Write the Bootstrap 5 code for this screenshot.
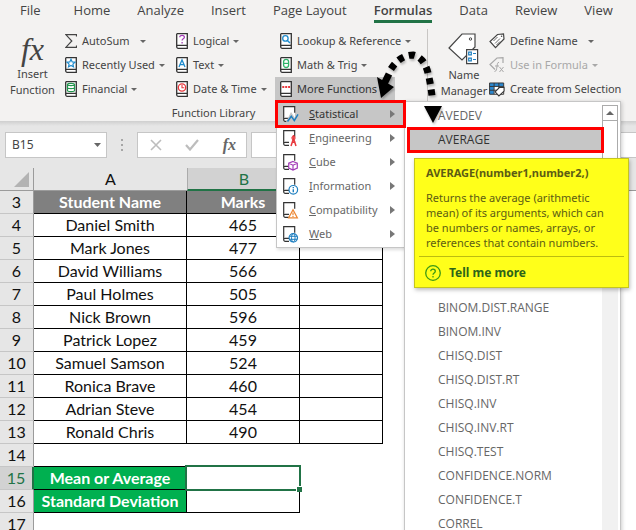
<!DOCTYPE html>
<html lang="en">
<head>
<meta charset="utf-8">
<meta name="viewport" content="width=device-width, initial-scale=1">
<title>Workbook - Formulas</title>
<link href="https://cdn.jsdelivr.net/npm/bootstrap@5.3.0/dist/css/bootstrap.min.css" rel="stylesheet">
<style>
body{font-family:"Noto Sans","Open Sans",sans-serif;font-size:11px;line-height:16px;color:#444;background:#fff}
.app{height:100vh}
button{border:0;background:none;padding:0;color:inherit;white-space:nowrap}
svg{display:block;flex:none;fill:none}
.ribbon{background:#f3f2f1;height:121px}
.tabs{gap:27px;padding-left:20px;font-family:"Open Sans",sans-serif;font-size:13px;line-height:17px;height:29px;padding-top:2px}
.tabs a{color:#444;text-decoration:none;height:21px;white-space:nowrap}
.tabs a:first-child{margin-right:6px}
.tabs a.current{font-weight:600;border-bottom:3px solid #217346}
.library{width:427px;flex:none}
.big{width:65px;padding-top:3px;flex:none}
.fx-letters{font-family:"Liberation Serif",serif;font-style:italic;font-size:32px;line-height:34px}
.big.manager{width:50px;margin-left:11px;padding-top:4px}
.manager svg{margin-bottom:2px}
.stack{flex:none}
.stack.one{width:111px}.stack.two{width:99px}
.cmd{height:24px;gap:5px;display:flex;align-items:center}
.cmd.open{background:#c6c6c6;width:120px;color:#333}
.stack.three .cmd{padding-left:5px}
.caret{border:3px solid transparent;border-top:3px solid #666;border-bottom:0;margin-left:-1px}
.caret.far{margin-left:5px}
.group-name{line-height:16px;padding-top:4px}
.rule{width:1px;height:73px;background:#c8c6c4}
.faded{color:#a8a8a8}
.faded .caret{border-top-color:#a8a8a8}
.bar{background:linear-gradient(#cfcfcf,#e6e6e6 5px);height:47px;padding:11px 0 10px 5px}
.field{background:#fff;border:1px solid #c6c6c6}
.field input{border:0;padding:0 0 0 6px;min-width:0;width:70px;color:#444;outline:0;font-size:12px}
.name-field{width:102px}
.dots{width:30px}
.fx-field{width:110px;padding:0 10px 0 12px}
.fx-field .small-fx{font:italic bold 16px/20px "Liberation Serif",serif;color:#666}
.sheet{table-layout:fixed;width:100%;border-collapse:separate;border-spacing:0;font-family:Lato,"Open Sans",sans-serif;font-size:16px;line-height:20px;color:#111;text-align:center}
.sheet td,.sheet th{height:23px;padding:0;font-weight:400;white-space:nowrap}
.sheet thead th{background:#e6e6e6;border-bottom:1px solid #9b9b9b}
.sheet thead th.on{background:#d2d2d2;color:#217346;border-bottom:2px solid #217346;border-left:1px solid #ababab}
.sheet tbody th.num,.sheet thead th.corner{background:#e6e6e6;border-right:1px solid #9b9b9b}
.sheet tbody th.num{border-bottom:1px solid #c6c6c6}
.sheet tbody th.on{background:#d2d2d2;color:#217346;border-right:2px solid #217346}
.sheet .ln{border-right:1px solid #000;border-bottom:1px solid #000}
.sheet .over td.top{border-bottom:1px solid #000}
.sheet .head{background:#808080;color:#fff;font-weight:700}
.sheet .sum{background:#00b050;color:#fff;font-weight:700}
.picked{position:relative}
.picked::before{content:"";position:absolute;inset:-2px;border:2px solid #217346}
.picked::after{content:"";position:absolute;right:-3px;bottom:-3px;width:6px;height:6px;background:#217346;border:1px solid #fff;border-width:1px 0 0 1px}
.menu{position:absolute;left:1px;top:23px;width:129px;background:#fff;border:1px solid #c6c6c6;padding:1px 0;box-shadow:1px 2px 3px #0002;z-index:5}
.menu .entry{height:24px;width:100%;display:flex;align-items:center;padding:0 9px 0 6px;color:#666}
.menu .entry svg{margin-right:10px}
.arrow-right{border:4px solid transparent;border-left:5px solid #777;border-right:0;margin-left:auto}
.menu .entry.hot,.fn.hot{background:#c6c6c6;color:#333;outline:3px solid #f00;position:relative;z-index:3}
.menu .entry.hot{outline-offset:-1px}
.submenu{position:absolute;left:127px;top:0;width:217px;height:100vh;background:#fff;border:1px solid #c6c6c6;padding:2px 2px 0 1px;box-shadow:1px 1px 4px #0003}
.submenu ul{width:196px}
.fn{display:block;width:100%;height:24px;text-align:left;padding-left:32px;color:#666;font-family:"Open Sans",sans-serif;font-size:12px}
.fn.hot{height:20px;margin:2px 4px 2px 4px;width:191px;padding-left:28px}
.gap-rows{height:144px;position:relative}
.track{width:16px;background:#f1f1f1;margin-top:1px}
.track button{height:16px;width:16px;border:1px solid #ababab;background:#fff;display:flex;align-items:center;justify-content:center}
.thumb{height:60px;border:1px solid #ababab;border-top:0;background:#fff}
.tip{position:absolute;left:8px;top:6px;width:215px;background:#ffff1a;border:1px solid #c5c51e;box-shadow:1px 2px 4px #0004;color:#5c5c14;z-index:6;padding:6px 4px 5px}
.tip .txt{padding:0 7px;line-height:15px;white-space:nowrap}
.tip .title{margin-bottom:10px}
.tip hr{margin:6px 0 7px;border-color:#bcbc10;opacity:1}
.tip a{color:#2d6418;text-decoration:none;font-weight:700;font-size:12px;padding:0 6px;gap:8px;height:18px}
.pointer{position:absolute;left:370px;top:45px;z-index:9;pointer-events:none;filter:drop-shadow(1px 2px 1px #0004)}
</style>
<script src="https://cdn.jsdelivr.net/npm/bootstrap@5.3.0/dist/js/bootstrap.bundle.min.js"></script>
</head>
<body>
<svg width="0" height="0" class="position-absolute" aria-hidden="true">
  <symbol id="book" viewBox="0 0 12 16"><path d="M.7.7h10.6v14.6H2.2a1.5 1.5 0 0 1-1.5-1.5V.7M.7 13.5a1.3 1.3 0 0 1 1.5-1.2h9" fill="#fff" stroke="#333" stroke-width="1.3"/></symbol>
  <symbol id="page" viewBox="0 0 16 17"><path d="M6 15.3H2.2a1.5 1.5 0 0 1-1.5-1.5V.7h11v6M.7 13.6a1.4 1.4 0 0 1 1.5-1.3H6" stroke="#333" stroke-width="1.2"/></symbol>
</svg>
<div class="app position-relative overflow-hidden">
  <header class="ribbon">
    <nav class="tabs d-flex" aria-label="Ribbon tabs">
      <a href="#">File</a><a href="#">Home</a><a href="#">Analyze</a><a href="#">Insert</a><a href="#">Page Layout</a><a href="#" class="current">Formulas</a><a href="#">Data</a><a href="#">Review</a><a href="#">View</a>
    </nav>
    <div class="d-flex">
      <section class="library">
        <div class="d-flex">
          <button class="big d-flex flex-column align-items-center"><span class="fx-letters">fx</span><span>Insert</span><span>Function</span></button>
          <div class="stack one">
            <button class="cmd"><svg width="12" height="16" viewBox="0 0 12 16"><path d="M11.5 3.5V1.6H.8L6.8 8 .8 14.4h10.7v-2" stroke="#444" stroke-width="1.2"/></svg>AutoSum<i class="caret far"></i></button>
            <button class="cmd"><svg width="12" height="16"><use href="#book"/><path d="M6 2.3l1.2 2.6 2.8.3-2.1 1.9.6 2.8L6 8.500 3.500 9.900l.6-2.800L2 5.200l2.800-.3z" stroke="#1e8bcd" stroke-width="1.200"/></svg>Recently Used<i class="caret"></i></button>
            <button class="cmd"><svg width="12" height="16"><use href="#book"/><path d="M2.500 3.500c0-1.500 7-1.500 7 0v6c0 1.500-7 1.500-7 0zc0 1.500 7 1.500 7 0M2.500 6.500c0 1.500 7 1.500 7 0" stroke="#23954e" stroke-width="1.200"/></svg>Financial<i class="caret"></i></button>
          </div>
          <div class="stack two">
            <button class="cmd"><svg width="12" height="16"><use href="#book"/><path d="M3.800 4.200c0-2.500 4.600-2.400 4.600 0 0 1.600-2.300 1.600-2.300 3.300M6.100 9v1.500" stroke="#a43db8" stroke-width="1.300"/></svg>Logical<i class="caret"></i></button>
            <button class="cmd"><svg width="12" height="16"><use href="#book"/><path d="M3 10l3-7 3 7M4 7.700h4" stroke="#1e8bcd" stroke-width="1.300"/></svg>Text<i class="caret"></i></button>
            <button class="cmd"><svg width="12" height="16"><use href="#book"/><circle cx="6" cy="6.500" r="3.700" stroke="#e8383d" stroke-width="1.300"/><path d="M6 4v2.800h2.300" stroke="#e8383d" stroke-width="1.100"/></svg>Date &amp; Time<i class="caret"></i></button>
          </div>
          <div class="stack three">
            <button class="cmd"><svg width="12" height="16"><use href="#book"/><circle cx="5.400" cy="5.400" r="2.700" stroke="#1e8bcd" stroke-width="1.300"/><path d="M7.400 7.400L10 10" stroke="#1e8bcd" stroke-width="1.400"/></svg>Lookup &amp; Reference<i class="caret"></i></button>
            <button class="cmd"><svg width="12" height="16"><use href="#book"/><rect x="3.600" y="2.300" width="5" height="8.200" rx="2.500" stroke="#2fb36a" stroke-width="1.300"/><path d="M3.600 6.400h5" stroke="#2fb36a" stroke-width="1.200"/></svg>Math &amp; Trig<i class="caret"></i></button>
            <div class="position-relative">
              <button class="cmd open" aria-expanded="true"><svg width="12" height="16"><use href="#book"/><path d="M2.300 6h7.800" stroke="#e8383d" stroke-width="2" stroke-dasharray="2 .9"/></svg>More Functions<i class="caret"></i></button>
              <div class="menu">
                <button class="entry hot"><svg width="16" height="17"><path d="M1 1h11v14H1z" fill="#fff"/><use href="#page"/><path d="M3 16l5-10 4 6 3-4v9H3z" fill="#c6c6c6"/><path d="M4.500 15.500l3.800-5.300 3 4.400 3.700-6.300" stroke="#1e7fc0" stroke-width="1.500"/></svg><span><u>S</u>tatistical</span><i class="arrow-right"></i></button>
                <button class="entry"><svg width="16" height="17"><use href="#page"/><path d="M8 16l2.500-7.500L13 16M8.600 12.300h4M10.500 5v2" stroke="#e8383d" stroke-width="1.500"/><circle cx="10.500" cy="8" r="1.500" stroke="#e8383d" stroke-width="1.300"/></svg><span><u>E</u>ngineering</span><i class="arrow-right"></i></button>
                <button class="entry"><svg width="16" height="17"><use href="#page"/><path d="M10 7.500l4.300 1.700v4.900L10 16l-4.300-1.900V9.200zM5.700 9.200l4.300 2 4.300-2M10 11.200V16" fill="#fff" stroke="#a43db8" stroke-width="1.200"/></svg><span><u>C</u>ube</span><i class="arrow-right"></i></button>
                <button class="entry"><svg width="16" height="17"><use href="#page"/><circle cx="10.300" cy="11.800" r="4.300" fill="#fff" stroke="#1e7fc0" stroke-width="1.200"/><path d="M10.300 9v1.300M10.300 11.300v3" stroke="#1e7fc0" stroke-width="1.400"/></svg><span><u>I</u>nformation</span><i class="arrow-right"></i></button>
                <button class="entry"><svg width="16" height="17"><use href="#page"/><path d="M10 7.800l4.300 8H5.700z" fill="#fff" stroke="#ed8733" stroke-width="1.300"/><path d="M10 10.500v2.600M10 13.800V15" stroke="#ed8733" stroke-width="1.200"/></svg><span><u>C</u>ompatibility</span><i class="arrow-right"></i></button>
                <button class="entry"><svg width="16" height="17"><use href="#page"/><circle cx="10.300" cy="11.800" r="4.200" fill="#fff" stroke="#1e7fc0" stroke-width="1.200"/><ellipse cx="10.300" cy="11.800" rx="1.800" ry="4.200" stroke="#1e7fc0"/><path d="M6.500 10.300h7.600M6.500 13.300h7.600" stroke="#1e7fc0"/></svg><span><u>W</u>eb</span><i class="arrow-right"></i></button>
                <div class="submenu d-flex justify-content-between">
                  <ul class="list-unstyled mb-0">
                    <li><button class="fn">AVEDEV</button></li>
                    <li><button class="fn hot">AVERAGE</button></li>
                    <li class="gap-rows">
                      <div class="tip" role="tooltip">
                        <div class="txt title fw-bold">AVERAGE(number1,number2,)</div>
                        <div class="txt">Returns the average (arithmetic<br>mean) of its arguments, which can<br>be numbers or names, arrays, or<br>references that contain numbers.</div>
                        <hr>
                        <a href="#" class="d-flex align-items-center"><svg width="16" height="16" viewBox="0 0 16 16"><circle cx="8" cy="8" r="7.300" stroke="#3c9a15" stroke-width="1.300"/><path d="M5.700 6.300c0-3 4.600-2.800 4.600 0 0 1.800-2.300 1.700-2.300 3.500M8 11v1.500" stroke="#3c9a15" stroke-width="1.300"/></svg>Tell me more</a>
                      </div>
                    </li>
                    <li><button class="fn">BINOM.DIST.RANGE</button></li>
                    <li><button class="fn">BINOM.INV</button></li>
                    <li><button class="fn">CHISQ.DIST</button></li>
                    <li><button class="fn">CHISQ.DIST.RT</button></li>
                    <li><button class="fn">CHISQ.INV</button></li>
                    <li><button class="fn">CHISQ.INV.RT</button></li>
                    <li><button class="fn">CHISQ.TEST</button></li>
                    <li><button class="fn">CONFIDENCE.NORM</button></li>
                    <li><button class="fn">CONFIDENCE.T</button></li>
                    <li><button class="fn">CORREL</button></li>
                  </ul>
                  <div class="track"><button aria-label="Scroll up"><svg width="8" height="4"><path d="M0 4l4-4 4 4z" fill="#666"/></svg></button><div class="thumb"></div></div>
                </div>
              </div>
            </div>
          </div>
        </div>
        <div class="group-name text-center">Function Library</div>
      </section>
      <div class="rule"></div>
      <section class="d-flex">
        <button class="big manager d-flex flex-column align-items-center"><svg width="32" height="32" viewBox="0 0 32 32"><path d="M14 1h13v13L14 27 1 15z" fill="#fff" stroke="#444" stroke-width="1.200"/><circle cx="22.500" cy="6" r="1.200" stroke="#444"/><path d="M18.600 16.600h11v14h-11z" fill="#fff" stroke="#444" stroke-width="1.200"/><path d="M20.700 19.200h2.600v2.600h-2.600zM20.700 25.200h2.600v2.600h-2.600zM25 20.500h3M25 26.500h3" stroke="#1e7fc0" stroke-width="1.200"/></svg><span>Name</span><span>Manager</span></button>
        <div class="stack">
          <button class="cmd"><svg width="16" height="16" viewBox="0 0 16 16"><path d="M8.500 1.500L14.500.8 15 6 6.500 14.700 1 8.500z" fill="#fff" stroke="#444" stroke-width="1.200"/><path d="M4.500 8l4-4M6 10.500l5-5M7.500 12l3.500-3.500" stroke="#666"/><circle cx="12.600" cy="3.200" r=".8" fill="#444"/></svg>Define Name<i class="caret far"></i></button>
          <button class="cmd faded"><svg width="16" height="16" viewBox="0 0 16 16"><path d="M6 12.500L1 7.500 8 1l6-.3V6" stroke="#a8a8a8" stroke-width="1.200"/><path d="M10 5.500c-1.800-.3-1.500 1.500-2 4s-.5 5-2.500 5M6 9h4M10.500 10l4 5M14.500 10l-4 5" stroke="#a8a8a8"/></svg>Use in Formula<i class="caret"></i></button>
          <button class="cmd"><svg width="16" height="16" viewBox="0 0 17 16"><path d="M.6 1.600h15v12H.6z" fill="#fff"/><path d="M.6 1.600h15v3.500H.6zM.6 5h4.600v8.600H.6z" fill="#2b88d0"/><path d="M.6 1.600h15v12H.6zM.6 5.300h15M.6 9.300h15M5.400 1.600v12M10.500 1.600v12" stroke="#333"/><path d="M11 6.500l5-.3v4L10.500 15.400 6.500 11z" fill="#fff" stroke="#333" stroke-width="1.100"/></svg>Create from Selection</button>
        </div>
      </section>
    </div>
  </header>
  <div class="bar d-flex">
    <div class="field name-field d-flex align-items-center"><input aria-label="Name box" value="B15"><button aria-label="Open name list" class="ms-auto me-1"><svg width="9" height="5"><path d="M1 0h7L4.500 4z" fill="#666"/></svg></button></div>
    <div class="dots d-flex align-items-center justify-content-center"><svg width="2" height="12"><path d="M0 0h2v2H0zM0 5h2v2H0zM0 10h2v2H0z" fill="#a6a6a6"/></svg></div>
    <div class="field fx-field d-flex align-items-center justify-content-between">
      <button aria-label="Cancel"><svg width="12" height="12"><path d="M1 1l10 10M11 1L1 11" stroke="#bdbdbd" stroke-width="1.600"/></svg></button>
      <button aria-label="Enter"><svg width="14" height="12"><path d="M1 6l4 4.500L13 1" stroke="#bdbdbd" stroke-width="2.200"/></svg></button>
      <button class="small-fx">fx</button>
    </div>
    <div class="field flex-grow-1 ms-1 d-flex border-end-0"><input class="flex-grow-1" aria-label="Formula"></div>
  </div>
  <table class="sheet">
    <colgroup><col style="width:34px"><col style="width:153px"><col style="width:113px"><col style="width:83px"><col></colgroup>
    <thead><tr><th class="corner" aria-label="Select all"><svg class="ms-auto me-1" width="15" height="15"><path d="M15 0v15H0z" fill="#b3b3b3"/></svg></th><th>A</th><th class="on">B</th><th></th><th></th></tr></thead>
    <tbody>
      <tr><th class="num">3</th><td class="ln head">Student Name</td><td class="ln head">Marks</td><td class="ln head"></td><td></td></tr>
      <tr><th class="num">4</th><td class="ln">Daniel Smith</td><td class="ln">465</td><td class="ln"></td><td></td></tr>
      <tr><th class="num">5</th><td class="ln">Mark Jones</td><td class="ln">477</td><td class="ln"></td><td></td></tr>
      <tr><th class="num">6</th><td class="ln">David Williams</td><td class="ln">566</td><td class="ln"></td><td></td></tr>
      <tr><th class="num">7</th><td class="ln">Paul Holmes</td><td class="ln">505</td><td class="ln"></td><td></td></tr>
      <tr><th class="num">8</th><td class="ln">Nick Brown</td><td class="ln">596</td><td class="ln"></td><td></td></tr>
      <tr><th class="num">9</th><td class="ln">Patrick Lopez</td><td class="ln">459</td><td class="ln"></td><td></td></tr>
      <tr><th class="num">10</th><td class="ln">Samuel Samson</td><td class="ln">524</td><td class="ln"></td><td></td></tr>
      <tr><th class="num">11</th><td class="ln">Ronica Brave</td><td class="ln">460</td><td class="ln"></td><td></td></tr>
      <tr><th class="num">12</th><td class="ln">Adrian Steve</td><td class="ln">454</td><td class="ln"></td><td></td></tr>
      <tr><th class="num">13</th><td class="ln">Ronald Chris</td><td class="ln">490</td><td class="ln"></td><td></td></tr>
      <tr class="over"><th class="num">14</th><td class="top"></td><td></td><td></td><td></td></tr>
      <tr><th class="num on">15</th><td class="ln sum">Mean or Average</td><td class="ln picked"></td><td></td><td></td></tr>
      <tr><th class="num">16</th><td class="ln sum">Standard Deviation</td><td class="ln"></td><td></td><td></td></tr>
      <tr><th class="num">17</th><td></td><td></td><td></td><td></td></tr>
    </tbody>
  </table>
  <svg class="pointer" width="80" height="85" viewBox="370 45 80 85" aria-hidden="true"><path d="M384 84L389 74" stroke="#000" stroke-width="7"/><path d="M391 69Q400 55 413 55Q424 57 428 73Q431 85 432.500 101" stroke="#000" stroke-width="7" stroke-dasharray="6 5.500"/><path d="M377 77l17 10-13 11zM424 106h18l-9 17z" fill="#000"/></svg>
</div>
</body>
</html>
